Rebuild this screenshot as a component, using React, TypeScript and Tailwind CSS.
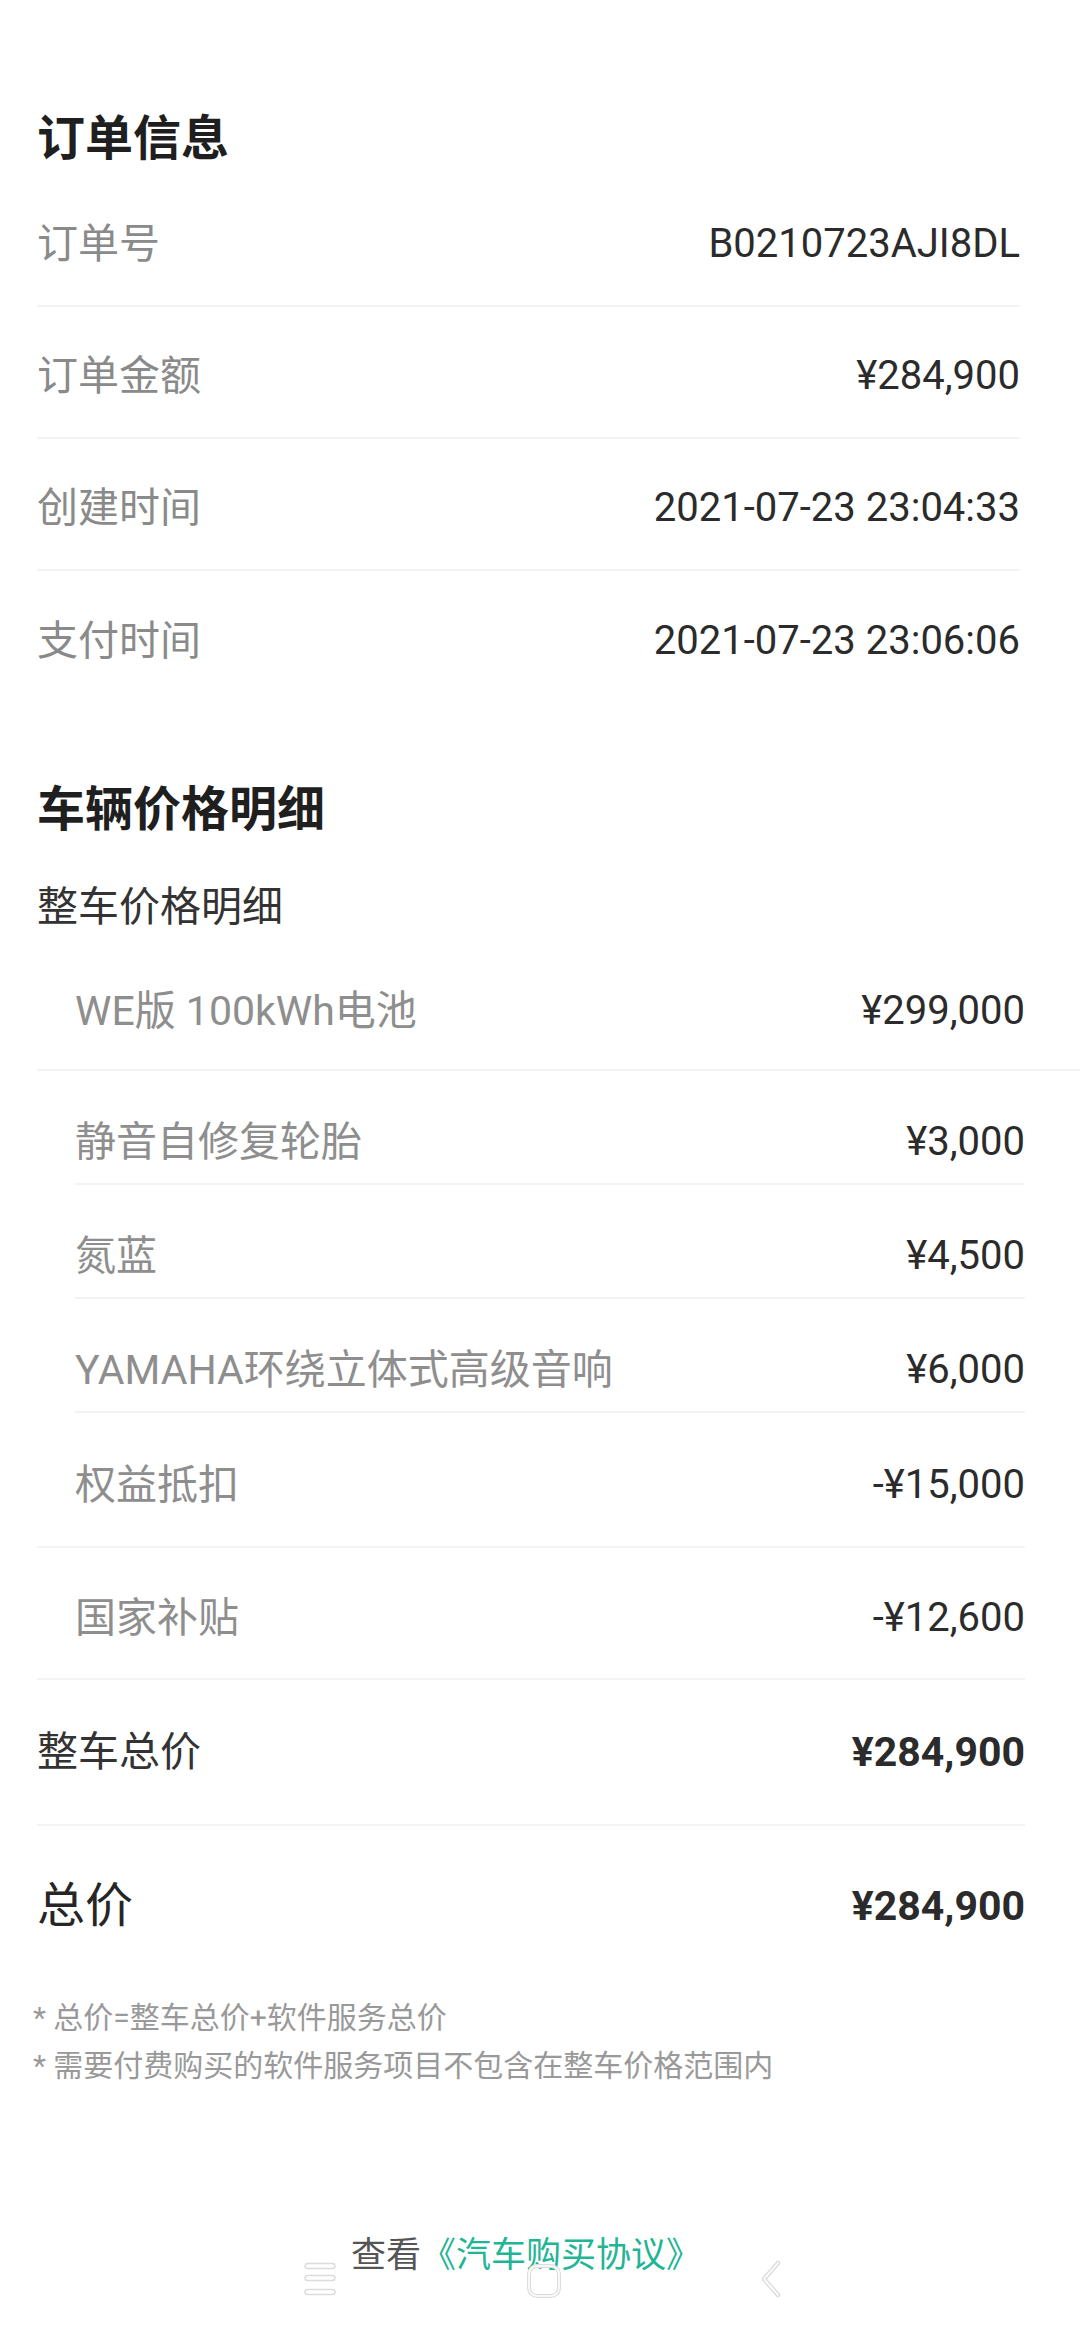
const orderRows = [
  { label: "订单号", value: "B0210723AJI8DL" },
  { label: "订单金额", value: "¥284,900" },
  { label: "创建时间", value: "2021-07-23 23:04:33" },
  { label: "支付时间", value: "2021-07-23 23:06:06" },
];

const optionRows = [
  { label: "静音自修复轮胎", value: "¥3,000" },
  { label: "氮蓝", value: "¥4,500" },
  { label: "YAMAHA环绕立体式高级音响", value: "¥6,000" },
];

function NavBar() {
  return (
    <div className="pointer-events-none absolute left-0 top-[2260px] h-[40px] w-full">
      {/* menu */}
      <svg className="absolute left-[303px] top-[2px]" width="34" height="34" viewBox="0 0 34 34">
        {[4, 16, 30].map((y) => (
          <rect key={y} x="2" y={y - 2.5} width="30" height="5" rx="2.5" fill="#fff" stroke="#dcdcdc" strokeWidth="1.4" />
        ))}
      </svg>
      {/* home */}
      <svg className="absolute left-[526px] top-[4px]" width="36" height="34" viewBox="0 0 36 34">
        <rect x="3" y="2" width="30" height="30" rx="8" fill="none" stroke="#dcdcdc" strokeWidth="4" />
        <rect x="3" y="2" width="30" height="30" rx="8" fill="none" stroke="#fff" strokeWidth="1.6" />
      </svg>
      {/* back */}
      <svg className="absolute left-[758px] top-[0px]" width="26" height="38" viewBox="0 0 26 38">
        <path d="M20 3 L6 19 L20 35" fill="none" stroke="#dcdcdc" strokeWidth="4.5" strokeLinecap="round" strokeLinejoin="round" />
        <path d="M20 3 L6 19 L20 35" fill="none" stroke="#fff" strokeWidth="1.8" strokeLinecap="round" strokeLinejoin="round" />
      </svg>
    </div>
  );
}

export default function App() {
  return (
    <div className="relative h-[2340px] w-[1080px] overflow-hidden bg-white font-[Roboto,'Noto_Sans_CJK_SC',sans-serif]">
      {/* 订单信息 */}
      <section className="pl-[37px] pr-[60px] pt-[115px]">
        <h2 className="text-[48px] font-semibold leading-[48px] text-[#1f1f1f]">订单信息</h2>
        <div className="mt-[12px]">
          {orderRows.map((r, i) => (
            <div
              key={r.label}
              className={
                "flex h-[132px] items-center justify-between pt-[8px] " +
                (i < orderRows.length - 1 ? "border-b-2 border-[#f3f3f3]" : "")
              }
            >
              <span className="text-[41px] leading-[44px] text-[#8a8a8a]">{r.label}</span>
              <span className="text-[40px] leading-[44px] text-[#2b2b2b]">{r.value}</span>
            </div>
          ))}
        </div>
      </section>

      {/* 车辆价格明细 */}
      <section className="pl-[37px] pr-[55px] pt-[83px]">
        <h2 className="text-[48px] font-semibold leading-[48px] text-[#1f1f1f]">车辆价格明细</h2>
        <div className="mt-[52px] text-[41px] leading-[42px] text-[#333]">整车价格明细</div>

        <div className="mr-[-55px] mt-[11px] flex h-[132px] items-center justify-between border-b-2 border-[#f3f3f3] pl-[38px] pr-[55px] pt-[14px]">
          <span className="text-[41px] leading-[44px] text-[#8e8e8e]">WE版 100kWh电池</span>
          <span className="text-[40px] leading-[44px] text-[#2b2b2b]">¥299,000</span>
        </div>

        <div className="pl-[38px]">
          {optionRows.map((r) => (
            <div key={r.label} className="flex h-[114px] items-center justify-between border-b-2 border-[#f3f3f3] pt-[30px]">
              <span className="text-[41px] leading-[44px] text-[#8e8e8e]">{r.label}</span>
              <span className="text-[40px] leading-[44px] text-[#2b2b2b]">{r.value}</span>
            </div>
          ))}
        </div>

        <div className="flex h-[135px] items-center justify-between border-b-2 border-[#f3f3f3] pl-[38px] pt-[10px]">
          <span className="text-[41px] leading-[44px] text-[#8e8e8e]">权益抵扣</span>
          <span className="text-[40px] leading-[44px] text-[#2b2b2b]">-¥15,000</span>
        </div>
        <div className="flex h-[132px] items-center justify-between border-b-2 border-[#f3f3f3] pl-[38px] pt-[10px]">
          <span className="text-[41px] leading-[44px] text-[#8e8e8e]">国家补贴</span>
          <span className="text-[40px] leading-[44px] text-[#2b2b2b]">-¥12,600</span>
        </div>

        <div className="flex h-[146px] items-center justify-between border-b-2 border-[#f3f3f3]">
          <span className="text-[41px] leading-[44px] text-[#333]">整车总价</span>
          <span className="text-[41px] font-bold leading-[44px] text-[#2b2b2b]">¥284,900</span>
        </div>

        <div className="flex h-[160px] items-center justify-between">
          <span className="text-[48px] leading-[50px] text-[#262626]">总价</span>
          <span className="text-[41px] font-bold leading-[44px] text-[#2b2b2b]">¥284,900</span>
        </div>

        <div className="ml-[-4px] mt-[8px] text-[30px] leading-[48px] text-[#999]">
          <p>* 总价=整车总价+软件服务总价</p>
          <p>* 需要付费购买的软件服务项目不包含在整车价格范围内</p>
        </div>
      </section>

      <div className="mt-[148px] flex justify-center pr-[28px] text-[35px] leading-[35px]">
        <span className="text-[#555]">查看</span>
        <span className="text-[#1fb595]">《汽车购买协议》</span>
      </div>

      <NavBar />
    </div>
  );
}
